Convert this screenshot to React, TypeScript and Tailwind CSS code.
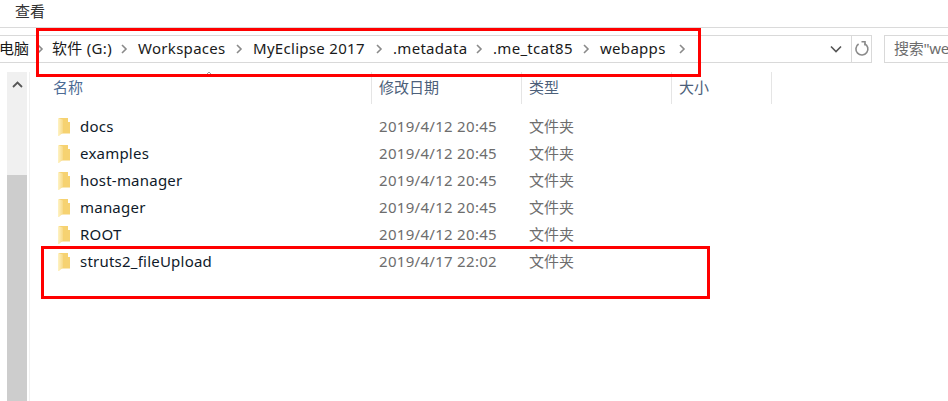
const rows = [
  { name: 'docs', date: '2019/4/12 20:45' },
  { name: 'examples', date: '2019/4/12 20:45' },
  { name: 'host-manager', date: '2019/4/12 20:45' },
  { name: 'manager', date: '2019/4/12 20:45' },
  { name: 'ROOT', date: '2019/4/12 20:45' },
  { name: 'struts2_fileUpload', date: '2019/4/17 22:02' },
];

const crumbs = [
  { label: '软件 (G:)', width: 'w-[86px]' },
  { label: 'Workspaces', width: 'w-[115px]' },
  { label: 'MyEclipse 2017', width: 'w-[140px]' },
  { label: '.metadata', width: 'w-[100px]' },
  { label: '.me_tcat85', width: 'w-[107px]' },
  { label: 'webapps', width: 'w-[96px]' },
];

function Chevron() {
  return (
    <svg width="8" height="10" viewBox="0 0 8 10" className="shrink-0" fill="none" stroke="#8a8a8a" strokeWidth="1.6">
      <path d="M2 1l4 4-4 4" />
    </svg>
  );
}

function FolderIcon() {
  return (
    <svg width="12" height="18" viewBox="0 0 12 18" className="shrink-0">
      <defs>
        <linearGradient id="fold" x1="0" y1="0" x2="1" y2="0">
          <stop offset="0" stopColor="#fff3c4" />
          <stop offset="1" stopColor="#f7d987" />
        </linearGradient>
      </defs>
      <path d="M1 0h9v4h2v11.5H1z" fill="#f6d271" />
      <path d="M0 0l5 1.5v13L1 18H0z" fill="url(#fold)" />
    </svg>
  );
}

export default function App() {
  return (
    <div className="relative w-[948px] h-[401px] overflow-hidden bg-white font-['Noto_Sans','Noto_Sans_CJK_SC',sans-serif] text-[15px] text-[#1a1a1a]">
      {/* Menu row */}
      <div className="h-[28px] border-b border-[#dadada] pl-[15px] text-[15px] leading-[23px] text-[#333]">查看</div>

      {/* Address row */}
      <div className="h-[44px] flex items-start pt-[7px]">
        <div className="w-[851px] h-[28px] border-y border-[#d9d9d9] flex items-center whitespace-nowrap">
          <span className="w-[37px] -ml-[1px] shrink-0 -mt-[2px]">电脑</span>
          <Chevron />
          <div className="flex items-center pl-[8px] tracking-[0.3px]">
            {crumbs.map((c) => (
              <div key={c.label} className={`${c.width} shrink-0 flex items-center justify-between pr-[10px]`}>
                <span className="-mt-[2px]">{c.label}</span>
                <Chevron />
              </div>
            ))}
          </div>
          <div className="ml-auto mr-[8px]">
            <svg width="14" height="9" viewBox="0 0 14 9" fill="none" stroke="#555" strokeWidth="1.6">
              <path d="M2 1.5l5 5 5-5" />
            </svg>
          </div>
        </div>
        <div className="w-[21px] h-[28px] border border-[#d9d9d9] flex items-center justify-center">
          <svg width="16" height="16" viewBox="0 0 16 16" fill="none" stroke="#8a8a8a" strokeWidth="1.6">
            <path d="M10.5 2.6A6 6 0 1 1 4.6 3" />
            <path d="M7.5 0.8h3.5v3.6" />
          </svg>
        </div>
        <div className="ml-[12px] w-[64px] shrink-0 h-[28px] border-y border-l border-[#d9d9d9] pl-[9px] leading-[24px] text-[15px] tracking-[-0.3px] text-[#6d6d6d] whitespace-nowrap">
          搜索"we
        </div>
      </div>

      {/* Body */}
      <div className="flex h-[329px]">
        <div className="ml-[7px] w-[20px] shrink-0 flex flex-col bg-[#f0f0f0]">
          <div className="h-[103px] flex justify-center pt-[9px]">
            <svg width="11" height="7" viewBox="0 0 11 7" fill="none" stroke="#555" strokeWidth="1.8">
              <path d="M1 6l4.5-4.5L10 6" />
            </svg>
          </div>
          <div className="flex-1 bg-[#cdcdcd]" />
        </div>
        <div className="ml-[2px] w-px bg-[#f0f0f0] shrink-0" />

        <div className="flex-1 flex flex-col">
          {/* Column headers */}
          <div className="h-[32px] flex text-[15px] text-[#4c607a] whitespace-nowrap relative">
            <div className="w-[342px] pl-[23px] leading-[31px] border-r border-[#e5e5e5] text-[#4c6b94]">名称</div>
            <div className="w-[150px] pl-[7px] leading-[31px] border-r border-[#e5e5e5]">修改日期</div>
            <div className="w-[150px] pl-[7px] leading-[31px] border-r border-[#e5e5e5]">类型</div>
            <div className="w-[100px] pl-[7px] leading-[31px] border-r border-[#e5e5e5]">大小</div>
            <svg width="10" height="6" viewBox="0 0 10 6" fill="none" stroke="#9a9a9a" strokeWidth="1" className="absolute left-[174px] -top-[1px]">
              <path d="M1 5l4-4 4 4" />
            </svg>
          </div>
          {/* Rows */}
          <div className="pt-[9px]">
            {rows.map((r) => (
              <div key={r.name} className="h-[27px] flex items-center whitespace-nowrap">
                <div className="w-[342px] pl-[28px] flex items-center gap-[10px]">
                  <FolderIcon />
                  <span className="text-[#0f1a2a] tracking-[0.22px] -mt-[1px]">{r.name}</span>
                </div>
                <div className="w-[150px] pl-[7px] text-[#6d6d6d] tracking-[0.3px] -mt-[1px]">{r.date}</div>
                <div className="pl-[7px] text-[#6d6d6d] -mt-[1px]">文件夹</div>
              </div>
            ))}
          </div>
        </div>
      </div>

      {/* Red annotation boxes drawn over the screenshot */}
      <div className="absolute left-[36px] top-[28px] w-[665px] h-[49px] border-[3px] border-[#ff0000]" />
      <div className="absolute left-[41px] top-[246px] w-[669px] h-[53px] border-[3px] border-[#ff0000]" />
    </div>
  );
}
